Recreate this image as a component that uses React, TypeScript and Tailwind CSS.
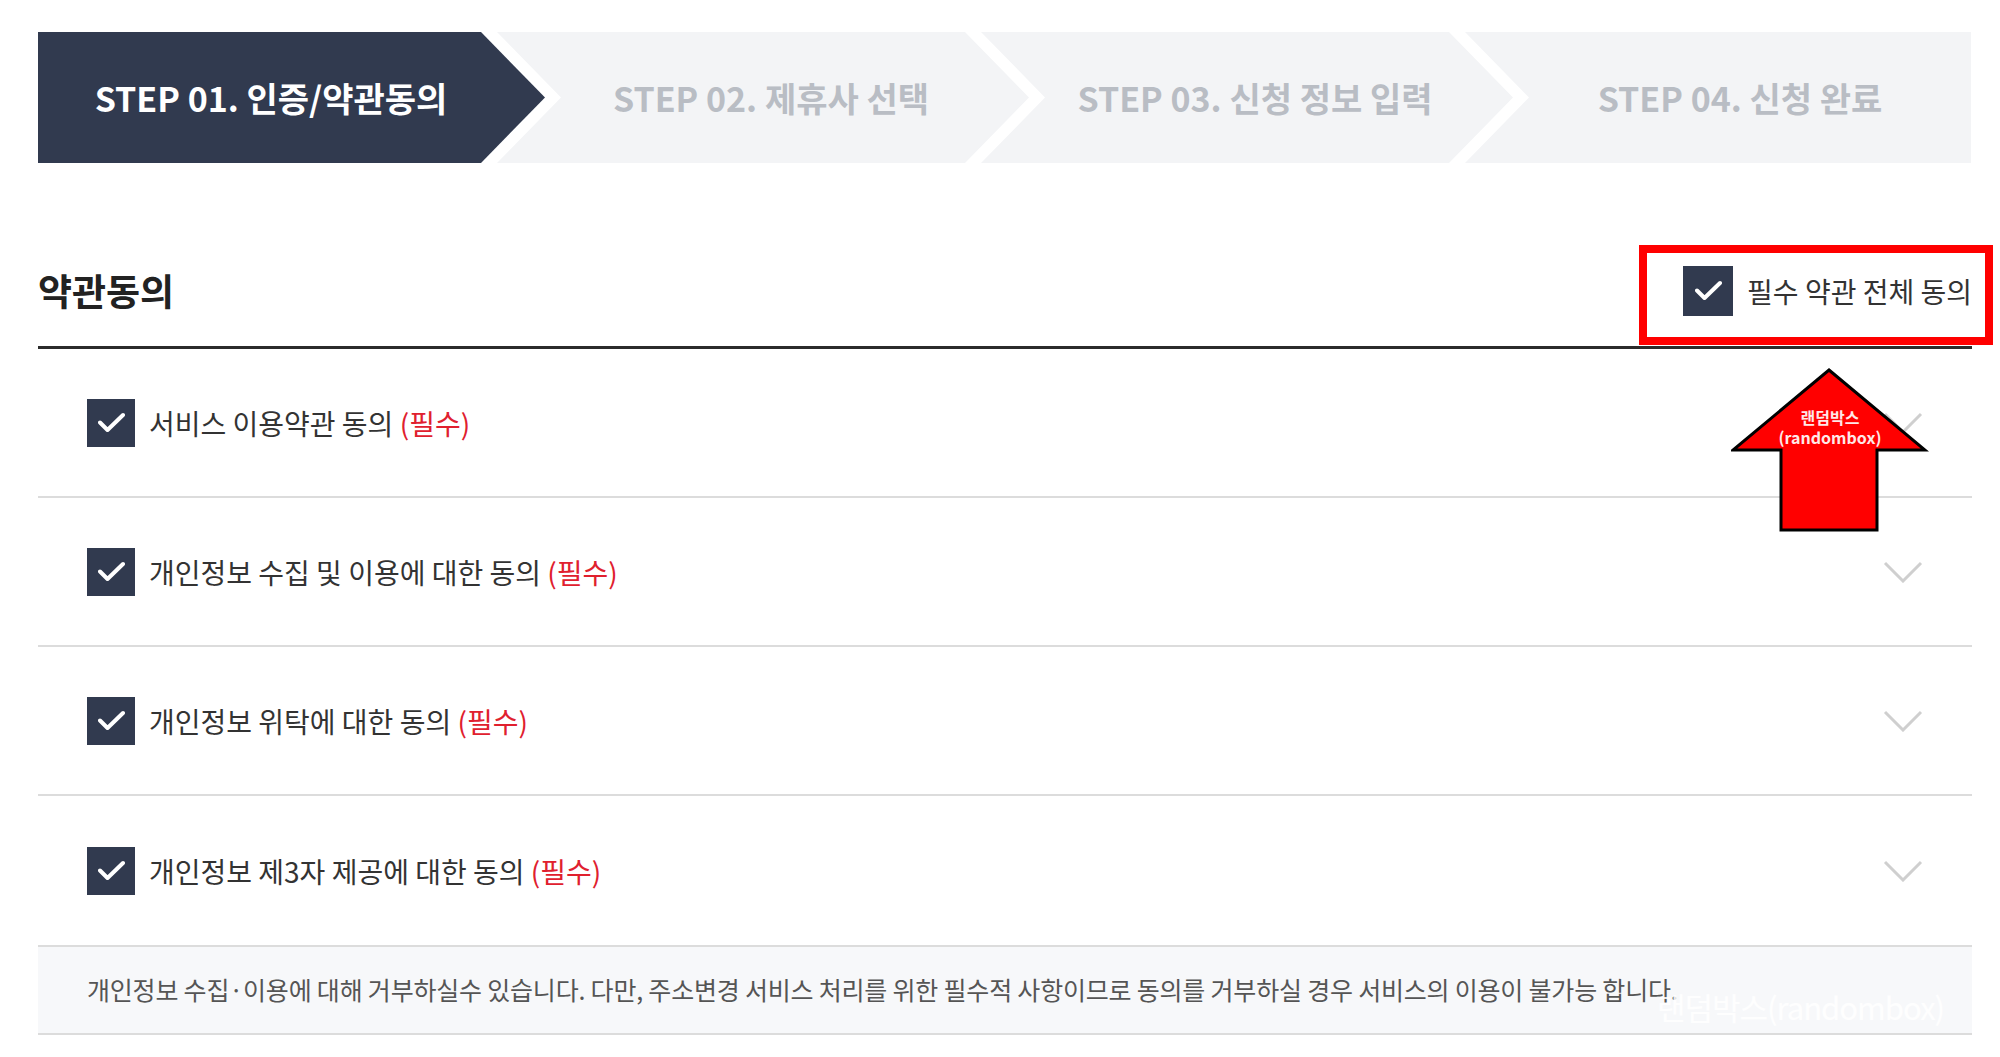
import React from 'react';

const font = "font-['Noto_Sans_CJK_KR','Noto_Sans',sans-serif]";

const steps = [
  {
    label: 'STEP 01. 인증/약관동의',
    active: true,
    cls: 'w-[507px] pr-[41px] [clip-path:polygon(0_0,443px_0,507px_50%,443px_100%,0_100%)]',
  },
  {
    label: 'STEP 02. 제휴사 선택',
    active: false,
    cls: 'w-[532px] -ml-[48px] pl-[16px] [clip-path:polygon(0_0,468px_0,532px_50%,468px_100%,0_100%,64px_50%)]',
  },
  {
    label: 'STEP 03. 신청 정보 입력',
    active: false,
    cls: 'w-[532px] -ml-[48px] pl-[16px] [clip-path:polygon(0_0,468px_0,532px_50%,468px_100%,0_100%,64px_50%)]',
  },
  {
    label: 'STEP 04. 신청 완료',
    active: false,
    cls: 'w-[506px] -ml-[48px] pl-[44px] [clip-path:polygon(0_0,100%_0,100%_100%,0_100%,64px_50%)]',
  },
];

const terms = [
  '서비스 이용약관 동의',
  '개인정보 수집 및 이용에 대한 동의',
  '개인정보 위탁에 대한 동의',
  '개인정보 제3자 제공에 대한 동의',
];

const CheckBox = ({ size = 48 }: { size?: number }) => (
  <span
    className={`flex shrink-0 items-center justify-center bg-[#313a4f] ${
      size === 50 ? 'h-[50px] w-[50px]' : 'h-[48px] w-[48px]'
    }`}
  >
    <svg width="27" height="21" viewBox="0 0 27 21" fill="none">
      <polyline points="2,10.5 9.5,18 25,3" stroke="#fff" strokeWidth="4" strokeLinecap="round" strokeLinejoin="round" />
    </svg>
  </span>
);

const Chevron = () => (
  <svg width="40" height="22" viewBox="0 0 40 22" fill="none">
    <polyline points="2,2 20,20 38,2" stroke="#cfcfcf" strokeWidth="3" />
  </svg>
);

export default function App() {
  return (
    <div className={`relative min-h-[1057px] w-[2000px] bg-white pl-[38px] pr-[28px] pt-[32px] ${font}`}>
      {/* steps */}
      <div className="flex h-[131px]">
        {steps.map((s) => (
          <div
            key={s.label}
            className={`flex h-full items-center justify-center text-[34px] font-bold ${s.cls} ${
              s.active ? 'bg-[#313a4f] text-white' : 'bg-[#f3f4f6] text-[#b9bdc4]'
            }`}
          >
            {s.label}
          </div>
        ))}
      </div>

      {/* heading */}
      <div className="mt-[75px] flex h-[111px] items-center justify-between border-b-[3px] border-[#2b2b2b] pb-[3px]">
        <h2 className="text-[37px] font-bold text-[#222]">약관동의</h2>
        <label className="flex items-center gap-[14px]">
          <CheckBox size={50} />
          <span className="text-[28px] text-[#333]">필수 약관 전체 동의</span>
        </label>
      </div>

      {/* terms */}
      <ul>
        {terms.map((t, i) => (
          <li
            key={t}
            className={`flex h-[149px] items-center justify-between pl-[49px] pr-[49px] ${
              i < terms.length - 1 ? 'border-b-2 border-[#dcdcdc]' : ''
            }`}
          >
            <div className="flex items-center gap-[14px]">
              <CheckBox />
              <span className="text-[28px] text-[#333]">
                {t} <span className="text-[#e0202e]">(필수)</span>
              </span>
            </div>
            <Chevron />
          </li>
        ))}
      </ul>

      <div className="flex h-[90px] items-center border-y-2 border-[#dcdcdc] bg-[#f7f8fa] pl-[49px]">
        <p className="text-[25px] tracking-[-0.2px] text-[#555]">
          개인정보 수집·이용에 대해 거부하실수 있습니다. 다만, 주소변경 서비스 처리를 위한 필수적 사항이므로 동의를 거부하실 경우 서비스의 이용이 불가능 합니다.
        </p>
      </div>

      {/* annotation overlays */}
      <div className="pointer-events-none absolute left-[1639px] top-[245px] h-[100px] w-[354px] border-[8px] border-[#ff0000]" />
      <div className="pointer-events-none absolute left-[1731px] top-[367px] h-[166px] w-[198px]">
        <svg width="198" height="166" viewBox="0 0 198 166">
          <polygon
            points="98,3 194,83 146,83 146,163 50,163 50,83 2,83"
            fill="#ff0000"
            stroke="#000"
            strokeWidth="3"
            strokeLinejoin="miter"
          />
        </svg>
        <div className="absolute left-0 top-[40px] w-full text-center text-[16px] font-bold leading-[20px] text-[#ffe8e8]">
          랜덤박스
          <br />
          (randombox)
        </div>
      </div>
      <div className="pointer-events-none absolute left-[1657px] top-[986px] text-[31px] leading-[42px] tracking-[-1px] text-white/85">
        랜덤박스(randombox)
      </div>
    </div>
  );
}
